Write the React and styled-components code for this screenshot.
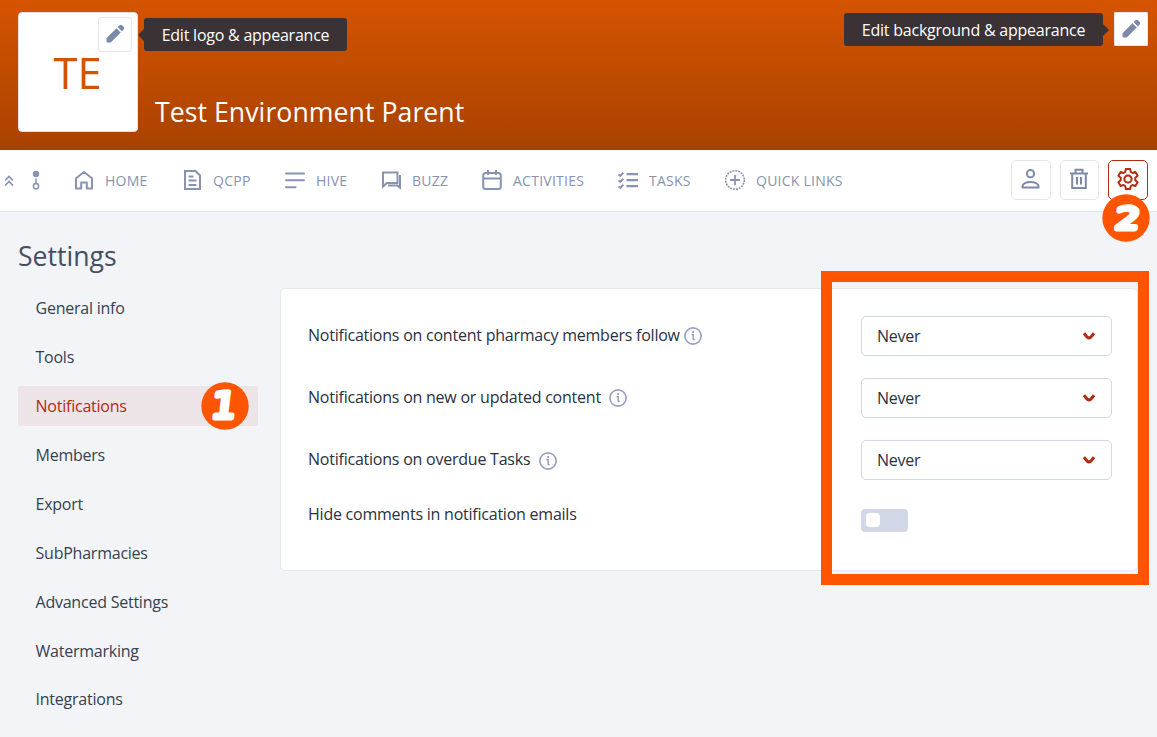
import React from "react";
import styled, { createGlobalStyle } from "styled-components";

const GlobalStyle = createGlobalStyle`
  * { box-sizing: border-box; }
  body {
    margin: 0;
    background: #f2f4f8;
    color: #2a3140;
    font: 16px/24px "Open Sans", "Noto Sans", sans-serif;
    letter-spacing: -0.23px;
  }
  svg { display: block; flex: none; }
`;

const Page = styled.div`
  width: 1157px;
  height: 737px;
  overflow: hidden;
`;

const Banner = styled.header`
  display: flex;
  height: 150px;
  padding: 12px 9px 0 18px;
  background: linear-gradient(#d55400, #a84200);
`;

const Logo = styled.div`
  position: relative;
  display: flex;
  align-items: center;
  justify-content: center;
  width: 120px;
  height: 120px;
  padding: 2px 1px 0 0;
  border: 1px solid #e6e0e4;
  border-radius: 4px;
  background: #fff;
  color: #d25400;
  font-size: 43.5px;
  line-height: 60px;
  letter-spacing: 0;
`;

const EditButton = styled.button`
  display: flex;
  align-items: center;
  justify-content: center;
  width: 34px;
  height: ${(p) => p.$height || 34}px;
  padding: 0 0 2px;
  border: 1px solid #e3e6f0;
  border-radius: ${(p) => p.$radius}px;
  background: #fff;
  color: #7d89a8;
`;

const LogoEdit = styled.div`
  position: absolute;
  top: 4px;
  left: 79px;
`;

const BannerText = styled.div`
  display: flex;
  flex: 1;
  flex-direction: column;
  align-items: flex-start;
  padding-top: 6px;
`;

const Tooltip = styled.div`
  position: relative;
  height: 33px;
  width: ${(p) => p.$width}px;
  margin: ${(p) => p.$margin};
  border-radius: 3px;
  background: #3a3235;
  color: #fff;
  line-height: 34px;
  text-align: center;
  white-space: nowrap;
  &::after {
    content: "";
    position: absolute;
    top: 11px;
    ${(p) => p.$side}: -6px;
    border: 6px solid transparent;
    border-${(p) => p.$side}-width: 0;
    border-${(p) => (p.$side === "left" ? "right" : "left")}-color: #3a3235;
  }
`;

const Title = styled.h1`
  margin: 42px 0 0 17px;
  color: #fff;
  font-size: 26.7px;
  font-weight: 400;
  line-height: 38px;
  letter-spacing: 0.03px;
`;

const Toolbar = styled.nav`
  display: flex;
  align-items: center;
  height: 62px;
  padding: 0 9px 2px 4px;
  border-bottom: 1px solid #e0e5f0;
  background: #fff;
  color: #8793b0;
`;

const Collapse = styled.div`
  display: flex;
  align-items: center;
  gap: 18px;
  width: 70px;
`;

const Links = styled.div`
  display: grid;
  flex: 1;
  grid-template-columns: 108px 103px 96px 101px 136px 107px 130px;
`;

const NavLink = styled.a`
  display: flex;
  align-items: center;
  gap: 11px;
  font-size: 14px;
  line-height: 20px;
  letter-spacing: 0.25px;
  white-space: nowrap;
`;

const NavText = styled.span`
  padding-top: 2px;
`;

const Actions = styled.div`
  display: flex;
  gap: 9px;
`;

const ActionButton = styled.button`
  position: relative;
  display: flex;
  align-items: center;
  justify-content: center;
  width: ${(p) => p.$width || 40}px;
  height: 40px;
  padding: 0 ${(p) => (p.$active ? 0 : 1)}px 1px 0;
  border: 1px solid ${(p) => (p.$active ? "#b32b10" : "#e3e6f0")};
  border-radius: 5px;
  background: #fff;
  color: ${(p) => (p.$active ? "#b32b10" : "#7d89a8")};
`;

const Marker = styled.svg`
  position: absolute;
  top: ${(p) => p.$top}px;
  left: ${(p) => p.$left}px;
  z-index: 2;
  width: 48px;
  height: 48px;
  circle { fill: #ff5500; }
  text {
    fill: #fff;
    stroke: #fff;
    stroke-width: 5px;
    stroke-linejoin: round;
    font-family: "DejaVu Sans", sans-serif;
    font-size: ${(p) => p.$size}px;
    font-weight: 400;
    letter-spacing: 0;
    text-anchor: middle;
  }
`;

const Heading = styled.h2`
  margin: 0;
  padding: 25px 0 13px 18px;
  color: #454e63;
  font-size: 26.6px;
  font-weight: 400;
  line-height: 38px;
  letter-spacing: 0;
`;

const Content = styled.main`
  display: flex;
  align-items: flex-start;
  gap: 22px;
  padding-left: 18px;
`;

const Menu = styled.ul`
  display: flex;
  flex-direction: column;
  gap: 9px;
  width: 240px;
  margin: 0;
  padding: 0;
  list-style: none;
`;

const MenuItem = styled.li`
  position: relative;
  height: 40px;
  padding-left: 17.5px;
  border-radius: 3px;
  background: ${(p) => (p.$active ? "#ece4e6" : "transparent")};
  color: ${(p) => (p.$active ? "#b32b10" : "#364150")};
  line-height: 40px;
  &:last-child { line-height: 38px; }
`;

const Card = styled.section`
  position: relative;
  width: 858px;
  height: 283px;
  padding: 27px 25px 0 27px;
  border: 1px solid #e4e6f1;
  border-radius: 5px;
  background: #fff;
`;

const Setting = styled.div`
  display: grid;
  grid-template-columns: 1fr 251px;
  height: ${(p) => p.$height || 62}px;
`;

const Label = styled.div`
  display: flex;
  align-items: center;
  gap: ${(p) => p.$gap || 8}px;
  height: ${(p) => p.$height || 38}px;
  white-space: nowrap;
  svg { color: #98a3c2; margin-top: ${(p) => p.$drop || 2}px; }
`;

const Select = styled.div`
  display: flex;
  align-items: center;
  justify-content: space-between;
  height: 40px;
  padding: 0 16px 0 15px;
  border: 1px solid #d3d7e7;
  border-radius: 5px;
  background: #fff;
  svg { color: #b32b10; }
`;

const Toggle = styled.div`
  width: 47px;
  height: 23px;
  margin-top: 7px;
  padding: 4px 5px;
  border-radius: 4px;
  background: #d2d7e7;
`;

const Knob = styled.div`
  width: 14px;
  height: 14px;
  border-radius: 4px;
  background: #fff;
`;

const Callout = styled.div`
  position: absolute;
  top: -18px;
  left: 540px;
  width: 328px;
  height: 314px;
  border: 11px solid #ff5500;
`;

const Line = ({ w = 20, h = w, box = `0 0 ${w} ${h}`, sw = 2, children }) => (
  <svg width={w} height={h} viewBox={box} fill="none" stroke="currentColor" strokeWidth={sw}>
    {children}
  </svg>
);

const Pencil = () => (
  <svg width="19" height="19" viewBox="0 0 19 19" fill="currentColor">
    <path d="M.5 14.2 10.4 4.3l4.3 4.3L4.8 18.5H1.7Q.5 18.5.5 17.3zM11.6 3.1 13.4 1.3Q14.7.1 15.9 1.3L17.7 3.1Q18.9 4.3 17.7 5.6L15.9 7.4z" />
  </svg>
);

const Step = ({ top, left, x, y, size, scale, children }) => (
  <Marker $top={top} $left={left} $size={size} viewBox="0 0 48 48">
    <circle cx="24" cy="24" r="23.7" />
    <text transform={`translate(${x} ${y}) skewX(-7) scale(${scale} 1)`}>{children}</text>
  </Marker>
);

const icons = {
  home: (
    <Line>
      <path d="M2 8.2 10 2l8 6.2v10.3h-5.2v-6H7.2v6H2z" strokeLinejoin="round" />
    </Line>
  ),
  doc: (
    <Line>
      <path d="M3 1h10.5L18 5.5V19H3zM6.5 6.5h5M6.5 10.5h8M6.5 15h8" />
    </Line>
  ),
  lines: (
    <Line>
      <path d="M1 3.4h18M1 10.3h18M1 17.2h9.5" strokeLinecap="round" />
    </Line>
  ),
  chat: (
    <Line>
      <path d="M2 2.5h14.5v10.5H6l-4 3.5zM19 5v12.6L16.5 15.6H7" />
    </Line>
  ),
  calendar: (
    <Line h={22}>
      <rect x="1.2" y="4" width="17.6" height="16" rx="2.5" />
      <path d="M1 9.5h18M6 1v5M14 1v5" />
    </Line>
  ),
  tasks: (
    <Line>
      <path d="M8.5 4.2H20M8.5 10.2H20M8.5 16.2H20" strokeWidth="2.3" />
      <path d="m.6 4.4 1.7 1.5L5.3 2.7M.6 10.4l1.7 1.5 3-3.2M.6 16.4l1.7 1.5 3-3.2" />
    </Line>
  ),
  plus: (
    <Line h={22} box="0 -1 20 22">
      <circle cx="10" cy="10" r="9.3" strokeWidth="1.6" strokeDasharray="2 .92" />
      <path d="M10 5v10M5 10h10" strokeWidth="1.8" />
    </Line>
  ),
};

const links = [
  ["home", "HOME"],
  ["doc", "QCPP"],
  ["lines", "HIVE"],
  ["chat", "BUZZ"],
  ["calendar", "ACTIVITIES"],
  ["tasks", "TASKS"],
  ["plus", "QUICK LINKS"],
];

const menu = [
  "General info",
  "Tools",
  "Notifications",
  "Members",
  "Export",
  "SubPharmacies",
  "Advanced Settings",
  "Watermarking",
  "Integrations",
];

const settings = [
  { label: "Notifications on content pharmacy members follow", gap: 4.5, drop: 2 },
  { label: "Notifications on new or updated content", gap: 8, drop: 2 },
  { label: "Notifications on overdue Tasks", gap: 9, drop: 4 },
];

const Info = () => (
  <Line w={18} sw={1.7}>
    <circle cx="9" cy="9" r="8.1" />
    <path d="M7.5 7.8h1.7v4.7h1.5" strokeWidth="1.5" />
    <path d="M8.3 5h1.7" strokeWidth="1.8" />
  </Line>
);

const Chevron = () => (
  <Line w={12} h={9} sw={3}>
    <path d="M1 1.3 4.2 5.2Q6 6.8 7.8 5.2L11 1.3" />
  </Line>
);

export default function App() {
  return (
    <Page>
      <GlobalStyle />
      <Banner>
        <Logo>
          TE
          <LogoEdit>
            <EditButton $radius={3} $height={35}><Pencil /></EditButton>
          </LogoEdit>
        </Logo>
        <BannerText>
          <Tooltip $side="left" $width={203} $margin="0 0 0 6px">Edit logo &amp; appearance</Tooltip>
          <Title>Test Environment Parent</Title>
        </BannerText>
        <Tooltip $side="right" $width={259} $margin="1px 11px 0 0">Edit background &amp; appearance</Tooltip>
        <EditButton $radius={1}><Pencil /></EditButton>
      </Banner>

      <Toolbar>
        <Collapse>
          <Line w={10} h={12} sw={1.7}>
            <path d="m1 6.5 4-4 4 4M1 11.5l4-4 4 4" />
          </Line>
          <Line w={8} h={20} sw={1.5}>
            <circle cx="4" cy="4" r="3.2" fill="currentColor" stroke="none" />
            <path d="M4 8.5v4.5" />
            <circle cx="4" cy="16.2" r="2.6" />
          </Line>
        </Collapse>
        <Links>
          {links.map(([icon, text]) => (
            <NavLink key={text}>{icons[icon]}<NavText>{text}</NavText></NavLink>
          ))}
        </Links>
        <Actions>
          <ActionButton>
            <Line w={20} h={22}>
              <circle cx="9.5" cy="5.7" r="3.6" />
              <path d="M1.5 19.5v-1.2c0-2.7 4-4.2 8-4.2s8 1.5 8 4.2v1.2z" strokeLinejoin="round" />
            </Line>
          </ActionButton>
          <ActionButton $width={39}>
            <Line w={20} h={22}>
              <path d="M1 5.5h18M3.2 5.5V20h13.6V5.5M6.5 5V1.8h7V5M8 9v7.5M12 9v7.5" />
            </Line>
          </ActionButton>
          <ActionButton $active>
            <Line w={24} sw={2}>
              <path strokeLinejoin="round" d="M9.8 2h4.4l.6 3 1.7 1 2.9-1 2.2 3.8-2.3 2v2.4l2.3 2-2.2 3.8-2.9-1-1.7 1-.6 3H9.8l-.6-3-1.7-1-2.9 1-2.2-3.8 2.3-2v-2.400l-2.300-2L4.600 5l2.900 1 1.700-1z" />
              <circle cx="12" cy="12" r="3.6" />
            </Line>
            <Step top={33} left={-7} x={24.5} y={35} size={30} scale={1.25}>2</Step>
          </ActionButton>
        </Actions>
      </Toolbar>

      <Heading>Settings</Heading>
      <Content>
        <Menu>
          {menu.map((item) => (
            <MenuItem key={item} $active={item === "Notifications"}>
              {item}
              {item === "Notifications" && (
                <Step top={-4} left={182.5} x={21.5} y={35.5} size={36} scale={1.08}>1</Step>
              )}
            </MenuItem>
          ))}
        </Menu>
        <Card>
          {settings.map(({ label, gap, drop }) => (
            <Setting key={label}>
              <Label $gap={gap} $drop={drop}>{label}<Info /></Label>
              <Select>Never<Chevron /></Select>
            </Setting>
          ))}
          <Setting $height={40}>
            <Label $height={24}>Hide comments in notification emails</Label>
            <Toggle><Knob /></Toggle>
          </Setting>
          <Callout />
        </Card>
      </Content>
    </Page>
  );
}
